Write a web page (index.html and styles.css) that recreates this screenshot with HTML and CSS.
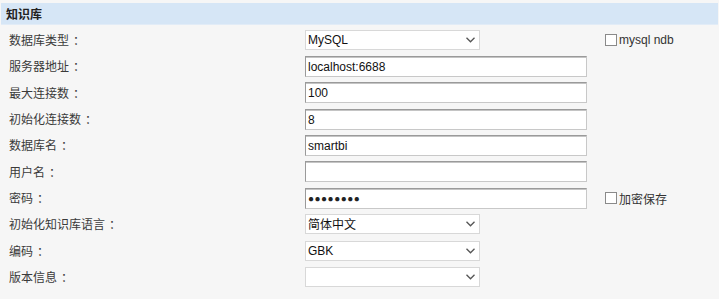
FILE: index.html
```html
<!DOCTYPE html>
<html lang="zh">
<head>
<meta charset="utf-8">
<title>知识库</title>
<link rel="stylesheet" href="styles.css">
</head>
<body>
<div class="panel">
  <div class="head">知识库</div>
  <div class="form">
    <div class="row">
      <div class="label">数据库类型<span class="colon">：</span></div>
      <div class="field"><div class="select"><span>MySQL</span><svg class="chev" width="9" height="6" viewBox="0 0 9 6"><path d="M0.5 0.8 L4.5 4.8 L8.5 0.8" fill="none" stroke="#555" stroke-width="1.3"/></svg></div></div>
      <div class="extra"><span class="chk"><span class="box"></span><span class="chk-text">mysql ndb</span></span></div>
    </div>
    <div class="row">
      <div class="label">服务器地址<span class="colon">：</span></div>
      <div class="field"><div class="input">localhost:6688</div></div>
      <div class="extra"></div>
    </div>
    <div class="row">
      <div class="label">最大连接数<span class="colon">：</span></div>
      <div class="field"><div class="input">100</div></div>
      <div class="extra"></div>
    </div>
    <div class="row">
      <div class="label">初始化连接数<span class="colon">：</span></div>
      <div class="field"><div class="input">8</div></div>
      <div class="extra"></div>
    </div>
    <div class="row">
      <div class="label">数据库名<span class="colon">：</span></div>
      <div class="field"><div class="input">smartbi</div></div>
      <div class="extra"></div>
    </div>
    <div class="row">
      <div class="label">用户名<span class="colon">：</span></div>
      <div class="field"><div class="input"></div></div>
      <div class="extra"></div>
    </div>
    <div class="row">
      <div class="label">密码<span class="colon">：</span></div>
      <div class="field"><div class="input pw">&#9679;&#9679;&#9679;&#9679;&#9679;&#9679;&#9679;&#9679;</div></div>
      <div class="extra"><span class="chk"><span class="box"></span><span class="chk-text cjk">加密保存</span></span></div>
    </div>
    <div class="row">
      <div class="label">初始化知识库语言<span class="colon">：</span></div>
      <div class="field"><div class="select"><span class="cjk">简体中文</span><svg class="chev" width="9" height="6" viewBox="0 0 9 6"><path d="M0.5 0.8 L4.5 4.8 L8.5 0.8" fill="none" stroke="#555" stroke-width="1.3"/></svg></div></div>
      <div class="extra"></div>
    </div>
    <div class="row">
      <div class="label">编码<span class="colon">：</span></div>
      <div class="field"><div class="select"><span>GBK</span><svg class="chev" width="9" height="6" viewBox="0 0 9 6"><path d="M0.5 0.8 L4.5 4.8 L8.5 0.8" fill="none" stroke="#555" stroke-width="1.3"/></svg></div></div>
      <div class="extra"></div>
    </div>
    <div class="row">
      <div class="label">版本信息<span class="colon">：</span></div>
      <div class="field"><div class="select"><span></span><svg class="chev" width="9" height="6" viewBox="0 0 9 6"><path d="M0.5 0.8 L4.5 4.8 L8.5 0.8" fill="none" stroke="#555" stroke-width="1.3"/></svg></div></div>
      <div class="extra"></div>
    </div>
  </div>
</div>
</body>
</html>
```

FILE: styles.css
```css
html, body {
  margin: 0;
  padding: 0;
  background: #f6f6f6;
}
body {
  font-family: "Liberation Sans", "Noto Sans CJK SC", sans-serif;
  font-size: 12px;
  color: #333;
}
.panel {
  padding-top: 3px;
}
.head {
  margin: 0 1px;
  height: 22px;
  box-sizing: border-box;
  background: #d6e6f6;
  border-bottom: 1px solid #e2ecf7;
  font-family: "Noto Sans CJK SC", sans-serif;
  font-weight: bold;
  font-size: 12px;
  color: #222;
  line-height: 21px;
  padding-left: 5px;
}
.form {
  padding-top: 2px;
  padding-left: 9px;
}
.row {
  display: grid;
  grid-template-columns: 296px 300px 1fr;
  align-items: center;
  height: 26.33px;
}
.label {
  font-family: "Noto Sans CJK SC", sans-serif;
  font-size: 12px;
  color: #3a3a3a;
  line-height: 16px;
}
.colon {
  padding-left: 4px;
}
.cjk {
  font-family: "Noto Sans CJK SC", sans-serif;
}
.field {
  display: flex;
  align-items: center;
}
.input {
  width: 282px;
  height: 21px;
  box-sizing: border-box;
  background: #fff;
  border: 1px solid;
  border-color: #9a9a9a #c8c8c8 #c8c8c8 #9a9a9a;
  box-shadow: inset 0 1px 0 #c4c4c4;
  padding: 1px 2px 0 2px;
  line-height: 18px;
  color: #111;
  white-space: nowrap;
  overflow: hidden;
}
.pw {
  font-size: 10px;
  letter-spacing: 0.5px;
  color: #222;
}
.select {
  width: 175px;
  height: 20px;
  box-sizing: border-box;
  background: #fff;
  border: 1px solid #d8d8d8;
  display: flex;
  align-items: center;
  justify-content: space-between;
  padding: 0 4px 0 2px;
  color: #111;
  line-height: 18px;
}
.chev {
  display: block;
  flex: none;
}
.extra {
  display: flex;
  align-items: center;
}
.chk {
  display: inline-flex;
  align-items: center;
}
.box {
  width: 12px;
  height: 12px;
  box-sizing: border-box;
  border: 1px solid #8a8a8a;
  background: #fff;
  margin-right: 2px;
}
.chk-text {
  color: #333;
  font-size: 12px;
}
```
